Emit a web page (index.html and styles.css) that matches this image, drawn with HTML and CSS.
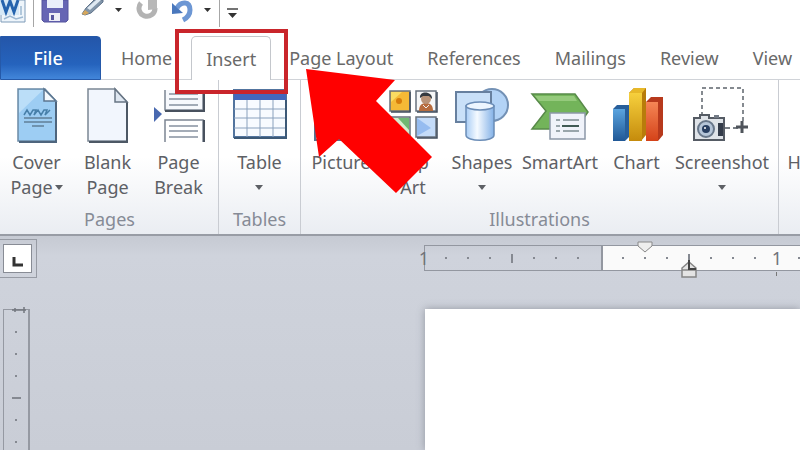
FILE: index.html
```html
<!DOCTYPE html>
<html lang="en">
<head>
  <meta charset="UTF-8" />
  <meta name="viewport" content="width=device-width, initial-scale=1" />
  <title>Insert tab</title>
  <link rel="stylesheet" href="styles.css">
</head>
<body>
  <div class="app">
    <header class="quick-bar">
      <button class="quick-btn word" aria-label="Word">
        <svg width="26" height="24" viewBox="0 0 26 24">
          <path d="M4 0h21v22H1V15z" fill="#eef5fb" stroke="#7f9bb8"/>
          <path d="M21 6v9M4 19l6-3 6 3 7-2" fill="none" stroke="#9db9d2" stroke-width="1.5"/>
          <path d="M0 0h19v15H0z" fill="#d5e8f6"/>
          <path d="M2 0l4 12 4-11 4 11 4-12" fill="none" stroke="#2463ad" stroke-width="3"/>
        </svg>
      </button>
      <span class="bar-line"></span>
      <button class="quick-btn save" aria-label="Save">
        <svg width="28" height="24" viewBox="0 0 28 24">
          <path d="M1 0h26v20l-2 2H3l-2-2z" fill="#6665b4" stroke="#55549e"/>
          <path d="M6 0h16v8H6z" fill="#e9eefa"/>
          <path d="M8 13h11v8H8z" fill="#ececf5"/>
          <path d="M10 15h3v5h-3z" fill="#55549e"/>
        </svg>
      </button>
      <button class="quick-btn pen" aria-label="Pen">
        <svg width="42" height="24" viewBox="0 0 42 24">
          <path d="M1 14l4-6 8-8h9v2L10 13l-6 2z" fill="#8296aa" stroke="#60738a"/>
          <path d="M6 8l9-8h5L9 10z" fill="#dfe9f2"/>
          <path d="M1 14l3-4 4 3-4 2z" fill="#d6a75b"/>
          <path d="M34 8h7l-3.500 4z" fill="#333"/>
        </svg>
      </button>
      <button class="quick-btn repeat" aria-label="Repeat">
        <svg width="24" height="24" viewBox="0 0 24 24">
          <path d="M5 3a8 8 0 1 0 14 5" fill="none" stroke="#b3b3b3" stroke-width="5"/>
          <path d="M12 0h9v9l-9 1z" fill="#b8b8b8"/>
        </svg>
      </button>
      <button class="quick-btn undo" aria-label="Undo">
        <svg width="40" height="24" viewBox="0 0 40 24">
          <path d="M5 8C9 1 18 1 18 10c0 5-3 8-7 10" fill="none" stroke="#6d97d4" stroke-width="5"/>
          <path d="M0 3v11l11-1z" fill="#4a78bd"/>
          <path d="M32 8h7l-3.500 4z" fill="#333"/>
        </svg>
      </button>
      <span class="bar-line"></span>
      <button class="quick-btn more" aria-label="Customize toolbar">
        <svg width="12" height="24" viewBox="0 0 12 24">
          <path d="M0 9h11" stroke="#444" stroke-width="1.500"/>
          <path d="M1 13h9l-4.500 5z" fill="#333"/>
        </svg>
      </button>
    </header>

    <nav class="tabs" role="tablist">
      <button class="tab file" role="tab">File</button>
      <button class="tab" role="tab">Home</button>
      <button class="tab active" role="tab" aria-selected="true">Insert</button>
      <button class="tab" role="tab">Page Layout</button>
      <button class="tab" role="tab">References</button>
      <button class="tab" role="tab">Mailings</button>
      <button class="tab" role="tab">Review</button>
      <button class="tab" role="tab">View</button>
    </nav>

    <div class="ribbon">
      <section class="group pages">
        <div class="tools">
          <button class="tool">
            <svg width="42" height="56" viewBox="0 0 42 56">
              <path d="M2 2h27l11 12v40H2z" fill="#9dcdf3" stroke="#6b8aa6" stroke-width="1.500"/>
              <path d="M3 3h24L3 26z" fill="#bbdef8"/>
              <path d="M40 15v40H3" fill="none" stroke="#4e657d" stroke-width="2"/>
              <path d="M28 2v12h12z" fill="#f4f9fd" stroke="#5c7690" stroke-width="1.500"/>
              <path d="M8 28l3-5 3 5 3-5h3l-2 5 4-5 3 5 3-5h3l-2 5 5-5" fill="none" stroke="#477fa9" stroke-width="1.500"/>
              <path d="M8 31h28M8 35h28M16 39h12" stroke="#607f98" stroke-width="1.500"/>
            </svg>
            <span>Cover<br>Page<i class="caret"></i></span>
          </button>
          <button class="tool">
            <svg width="42" height="56" viewBox="0 0 42 56">
              <path d="M1 2h27l12 13v39H1z" fill="#f2f6fd" stroke="#7b8794" stroke-width="1.500"/>
              <path d="M40 15v40H2" fill="none" stroke="#4d5865" stroke-width="2"/>
              <path d="M28 2v13h12z" fill="#dfe7f1" stroke="#687584" stroke-width="1.500"/>
            </svg>
            <span>Blank<br>Page</span>
          </button>
          <button class="tool">
            <svg width="52" height="56" viewBox="0 0 52 56">
              <path d="M12 3v20h38V3" fill="#f7f9fd" stroke="#7c8592" stroke-width="1.500"/>
              <path d="M12 24h39V4" fill="none" stroke="#48515e" stroke-width="2"/>
              <path d="M16 7h29M16 12h29M16 18h29M16 39h29M16 44h29M16 50h29" stroke="#8791a0" stroke-width="1.500"/>
              <path d="M12 55V33h38v22" fill="none" stroke="#7c8592" stroke-width="1.500"/>
              <path d="M51 33v22" stroke="#48515e" stroke-width="2"/>
              <path d="M1 20l8 7-8 8z" fill="#4969b0"/>
            </svg>
            <span>Page<br>Break</span>
          </button>
        </div>
        <h2>Pages</h2>
      </section>

      <section class="group tables">
        <div class="tools">
          <button class="tool">
            <svg width="54" height="56" viewBox="0 0 54 56">
              <path d="M1 3h52v47H1z" fill="#f8fbff" stroke="#52749e" stroke-width="2"/>
              <path d="M1 3h52v10H1z" fill="#4267bd"/>
              <path d="M1 22h52M1 31h52M1 41h52M14 13v37M27 13v37M40 13v37" stroke="#8aa1bd"/>
              <path d="M1 51h52V13" fill="none" stroke="#3c5977" stroke-width="2"/>
            </svg>
            <span>Table<br><i class="caret"></i></span>
          </button>
        </div>
        <h2>Tables</h2>
      </section>

      <section class="group illustrations">
        <div class="tools">
          <button class="tool picture">
            <svg width="54" height="56" viewBox="0 0 54 56">
              <path d="M1 5h52v48H1z" fill="#dceafa" stroke="#59708d" stroke-width="2"/>
              <path d="M4 50l16-19 12 10 9-8 9 17z" fill="#6b9b59"/>
            </svg>
            <span>Picture</span>
          </button>
          <button class="tool clip">
            <svg width="50" height="56" viewBox="0 0 50 56">
              <path d="M2 4h20v20H2z" fill="#f5b936" stroke="#68727e" stroke-width="1.500"/>
              <path d="M3 5h11L3 15z" fill="#fbdc62"/>
              <circle cx="11" cy="14" r="3" fill="#d77c0b"/>
              <path d="M28 4h20v20H28z" fill="#f6f7f8" stroke="#68727e" stroke-width="1.500"/>
              <path d="M31 24c0-6 3-8 7-8s7 2 7 8z" fill="#b76c3e"/>
              <circle cx="38" cy="12" r="5" fill="#b99378"/>
              <path d="M32 11c-1-8 13-7 12 1l-3-3h-6z" fill="#353a40"/>
              <path d="M35 18l3 3 3-3" fill="none" stroke="#eee"/>
              <path d="M2 30h20v20H2z" fill="#d8ecce" stroke="#68727e" stroke-width="1.500"/>
              <path d="M10 31l11 12V31z" fill="#70b873"/>
              <path d="M28 30h20v20H28z" fill="#c5dcf9" stroke="#68727e" stroke-width="1.500"/>
              <path d="M29 31l14 10-14 8z" fill="#96bcf0"/>
              <path d="M22 5v20H3M49 5v20H29M49 31v20H29" fill="none" stroke="#424e5d" stroke-width="1.500"/>
            </svg>
            <span>Clip<br>Art</span>
          </button>
          <button class="tool shapes">
            <svg width="56" height="56" viewBox="0 0 56 56">
              <defs>
                <linearGradient id="cylinder">
                  <stop offset="0" stop-color="#a9cdf5"/>
                  <stop offset=".4" stop-color="#f5faff"/>
                  <stop offset="1" stop-color="#83b1e7"/>
                </linearGradient>
              </defs>
              <circle cx="38" cy="18" r="16" fill="#b3d3f6" stroke="#7391b5" stroke-width="2"/>
              <path d="M2 5h35v30H2z" fill="#c9e0f8" stroke="#67809f" stroke-width="2"/>
              <path d="M12 19v29c0 7 28 7 28 0V19z" fill="url(#cylinder)" stroke="#6b8db7" stroke-width="1.500"/>
              <ellipse cx="26" cy="19" rx="14" ry="4" fill="#edf6ff" stroke="#6b8db7" stroke-width="1.500"/>
            </svg>
            <span>Shapes<br><i class="caret"></i></span>
          </button>
          <button class="tool smartart">
            <svg width="60" height="56" viewBox="0 0 60 56">
              <path d="M2 7h43l13 18-12 17H2l14-18z" fill="#73b45a" stroke="#588a49" stroke-width="1.500"/>
              <path d="M5 9h39l3 5H9z" fill="#95ca7c"/>
              <path d="M20 26h35v26H20z" fill="#f0f3fa" stroke="#8c98a8" stroke-width="1.500"/>
              <path d="M26 33h4M33 33h16M26 39h4M26 44h4M33 44h16" stroke="#7c8c91" stroke-width="1.500"/>
              <path d="M32 39h17" stroke="#415b55" stroke-width="2"/>
            </svg>
            <span>SmartArt</span>
          </button>
          <button class="tool chart">
            <svg width="54" height="56" viewBox="0 0 54 56">
              <defs>
                <linearGradient id="blue" x2="0" y2="1">
                  <stop stop-color="#5aa4df"/><stop offset="1" stop-color="#205896"/>
                </linearGradient>
                <linearGradient id="gold" x2="0" y2="1">
                  <stop stop-color="#f6d03d"/><stop offset="1" stop-color="#c58b0c"/>
                </linearGradient>
                <linearGradient id="red" x2="0" y2="1">
                  <stop stop-color="#f58555"/><stop offset="1" stop-color="#d44219"/>
                </linearGradient>
              </defs>
              <path d="M3 22l4-4h13v31l-5 5H3z" fill="#285f9b"/>
              <path d="M3 22h12v32H3z" fill="url(#blue)"/>
              <path d="M36 15l5-5h12v38l-5 6H36z" fill="#b7391c"/>
              <path d="M36 15h12v39H36z" fill="url(#red)"/>
              <path d="M19 6l5-5h12v47l-5 6H19z" fill="#b87c0b"/>
              <path d="M19 6h13v48H19z" fill="url(#gold)"/>
              <path d="M19 6l5-5h12l-4 5z" fill="#e7b829"/>
            </svg>
            <span>Chart</span>
          </button>
          <button class="tool screenshot">
            <svg width="58" height="56" viewBox="0 0 58 56">
              <path d="M9 29V1h41v34" fill="none" stroke="#858a90" stroke-width="2" stroke-dasharray="4 3"/>
              <path d="M32 41h16" stroke="#777d84" stroke-width="2" stroke-dasharray="5 3"/>
              <path d="M43 40h12M49 34v12" stroke="#4f545b" stroke-width="3"/>
              <path d="M1 31h6v-3h9v3h15v22H1z" fill="#dfe3e8" stroke="#555b64" stroke-width="2"/>
              <path d="M25 36h5v13h-5z" fill="#343c4a"/>
              <path d="M21 31v-3h5v3" fill="#737b86"/>
              <circle cx="13" cy="42" r="8" fill="#b5c5d8" stroke="#68778a" stroke-width="2"/>
              <circle cx="13" cy="42" r="4" fill="#283e61"/>
              <circle cx="12" cy="41" r="1" fill="#fff"/>
            </svg>
            <span>Screenshot<br><i class="caret"></i></span>
          </button>
        </div>
        <h2>Illustrations</h2>
      </section>

      <section class="group links">
        <div class="tools">
          <button class="tool">
            <svg width="60" height="56" viewBox="0 0 60 56">
              <circle cx="30" cy="27" r="26" fill="#328da0" stroke="#327184" stroke-width="2"/>
              <path d="M11 15l17-5 7 14-12 9-3 14-11-14z" fill="#86bd78"/>
            </svg>
            <span>Hyperlink</span>
          </button>
        </div>
      </section>
    </div>

    <main class="workspace">
      <div class="ruler-row">
        <div class="corner">
          <button class="tab-stop" aria-label="Left tab">
            <svg width="12" height="12" viewBox="0 0 12 12"><path d="M2 1v8h9" fill="none" stroke="#333" stroke-width="3"/></svg>
          </button>
        </div>
        <div class="ruler">
          <div class="margin-part">
            <span class="tick">1</span><span class="tick dot"></span><span class="tick dot"></span><span class="tick dot"></span><span class="tick half"></span><span class="tick dot"></span><span class="tick dot"></span><span class="tick dot"></span>
          </div>
          <div class="page-part">
            <span class="tick dot"></span><span class="tick dot"></span><span class="tick dot"></span><span class="tick half"></span><span class="tick dot"></span><span class="tick dot"></span><span class="tick dot"></span><span class="tick">1</span><span class="tick dot"></span>
            <svg class="first-indent" width="16" height="12" viewBox="0 0 16 12"><path d="M1 1h14v4l-7 6-7-6z" fill="#eee" stroke="#888"/></svg>
            <svg class="left-indent" width="18" height="20" viewBox="0 0 18 20">
              <path d="M2 18v-9l7-6 7 6v9zM2 11h14" fill="#e4e4e4" stroke="#858585" stroke-width="1.500"/>
              <path d="M9 1v9h7" fill="none" stroke="#444" stroke-width="2"/>
            </svg>
            <span class="default-stop"></span>
          </div>
        </div>
      </div>
      <div class="document-row">
        <div class="side-ruler">
          <svg class="top-mark" width="16" height="6" viewBox="0 0 16 6"><path d="M0 3h14M3 1v4M12 0v6" stroke="#73777f" stroke-width="1.500"/></svg>
          <span class="side-tick dot"></span><span class="side-tick dot"></span><span class="side-tick dot"></span><span class="side-tick half"></span><span class="side-tick dot"></span>
        </div>
        <div class="paper"></div>
      </div>
    </main>

    <div class="highlight"></div>
    <svg class="pointer" width="128" height="128" viewBox="0 0 128 128">
      <path d="M1 1l89 11-19 21 56 56-36 36-57-54-20 18z" fill="#f00"/>
    </svg>
  </div>
</body>
</html>
```

FILE: styles.css
```css
* {
  box-sizing: border-box;
}

body {
  margin: 0;
  font-family: "Noto Sans", "Open Sans", sans-serif;
  font-size: 18px;
  color: #5d6065;
  background: #cbcfd8;
}

button {
  padding: 0;
  border: 0;
  background: none;
  font: inherit;
  color: inherit;
}

svg {
  display: block;
  flex-shrink: 0;
}

.app {
  position: relative;
  min-height: 100vh;
  display: flex;
  flex-direction: column;
  overflow: hidden;
}

/* quick access toolbar */
.quick-bar {
  display: flex;
  height: 36px;
  padding-bottom: 9px;
  background: #fff;
}

.quick-btn {
  display: flex;
}

.bar-line {
  width: 1px;
  margin: 0 7px;
  background: #a6a6a6;
}

.pen {
  margin-left: 12px;
}

.repeat {
  margin-left: 13px;
}

.undo {
  margin-left: 12px;
}

/* tabs */
.tabs {
  display: flex;
  height: 44px;
  background: linear-gradient(#d0d3d8, #d0d3d8) bottom / 100% 1px no-repeat #fff;
}

.tab {
  flex-shrink: 0;
  padding: 0 17px;
  white-space: nowrap;
  color: #696969;
}

.tab.file {
  width: 101px;
  padding-right: 22px;
  margin-right: 3px;
  border: 1px solid #2559a9;
  border-radius: 0 4px 0 0;
  background: linear-gradient(#2456a9, #2563bd 65%, #4286da);
  color: #fff;
  font-weight: 500;
}

.tab.active {
  padding: 0 14px;
  margin: 0 1px 0 2px;
  border: 1px solid #c4c7cc;
  border-bottom: 0;
  border-radius: 5px 5px 0 0;
  background: #fff;
}

/* ribbon */
.ribbon {
  display: flex;
  height: 156px;
  border-bottom: 2px solid #989ca5;
  background: linear-gradient(#fff 50%, #eaedf2);
}

.group {
  flex-shrink: 0;
  padding-top: 7px;
  border-right: 1px solid #c9ccd2;
}

.tools {
  display: flex;
  height: 120px;
}

.tool {
  display: flex;
  flex-direction: column;
  align-items: center;
  width: 71px;
  line-height: 25px;
  white-space: nowrap;
}

.tool svg {
  margin-bottom: 7px;
}

.group h2 {
  margin: 0;
  font-size: 18px;
  font-weight: 400;
  line-height: 25px;
  text-align: center;
  color: #868b96;
}

.caret {
  display: inline-block;
  margin-left: 2px;
  border: 4px solid transparent;
  border-top: 5px solid #5d6065;
  border-bottom: 0;
  vertical-align: 4px;
}

.tables .caret,
.illustrations .caret {
  margin-left: 0;
}

.pages {
  width: 219px;
  padding-left: 1px;
}

.tables {
  width: 82px;
}

.tables .tools {
  justify-content: center;
}

.picture {
  width: 80px;
}

.clip {
  width: 64px;
}

.shapes {
  width: 74px;
}

.smartart {
  width: 82px;
}

.screenshot {
  width: 100px;
}

.illustrations {
  width: 478px;
}

.links {
  padding-left: 4px;
}

.links .tool {
  width: 90px;
}

/* document area */
.workspace {
  flex: 1;
  display: flex;
  flex-direction: column;
  background: linear-gradient(#c6cad3, #cfd3dc 20px, #c9cdd6);
}

.ruler-row {
  display: flex;
  align-items: flex-start;
  padding-top: 3px;
  height: 73px;
}

.corner {
  width: 37px;
  height: 39px;
  padding: 4px 4px 4px 3px;
  border: 1px solid #979ba4;
  border-left: 0;
}

.tab-stop {
  display: flex;
  align-items: center;
  justify-content: center;
  width: 29px;
  height: 29px;
  padding-top: 6px;
  border: 1px solid #888c95;
  background: #fff;
}

.ruler {
  flex: 1;
  display: flex;
  height: 26px;
  margin-top: 6px;
  margin-left: 387px;
  border: 1px solid #9397a0;
  border-right: 0;
}

.margin-part,
.page-part {
  display: flex;
  align-items: center;
  height: 24px;
}

.margin-part {
  width: 178px;
  border-right: 2px solid #9397a0;
}

.margin-part .tick:first-child {
  margin-left: -12px;
}

.page-part {
  position: relative;
  flex: 1;
  width: 0;
  padding-left: 9px;
  background: #fafafa;
}

.tick {
  flex: 0 0 22px;
  text-align: center;
  line-height: 24px;
  color: #70737a;
}

.dot::before,
.half::before {
  content: "";
  display: block;
  width: 2px;
  height: 2px;
  margin: auto;
  background: #858991;
}

.tick.half::before {
  height: 9px;
}

.first-indent,
.left-indent,
.default-stop {
  position: absolute;
}

.first-indent {
  left: 34px;
  top: -5px;
}

.left-indent {
  left: 77px;
  top: 13px;
}

.default-stop {
  left: 173px;
  top: 26px;
  width: 1px;
  height: 4px;
  background: #777;
}

.document-row {
  flex: 1;
  display: flex;
}

.side-ruler {
  position: relative;
  display: flex;
  flex-direction: column;
  width: 27px;
  margin-left: 3px;
  padding-top: 11px;
  border: 1px solid #9599a2;
  border-right-width: 2px;
  border-bottom: 0;
}

/* room for one more mark at the lower end */
.side-ruler::after {
  content: "";
  width: 2px;
  height: 2px;
  margin: 10px auto 0;
  background: #858991;
}

.top-mark {
  position: absolute;
  left: 8px;
  top: -3px;
}

.side-tick {
  display: flex;
  align-items: center;
  height: 22px;
}

.side-tick.half::before {
  width: 9px;
}

.paper {
  flex: 1;
  margin-left: 395px;
  background: #fff;
  box-shadow: 0 0 8px #9296a0;
}

/* callout over the Insert tab */
.highlight {
  position: absolute;
  left: 175px;
  top: 29px;
  width: 113px;
  height: 65px;
  border: 4px solid #c9252b;
}

.pointer {
  position: absolute;
  left: 305px;
  top: 68px;
}
```
